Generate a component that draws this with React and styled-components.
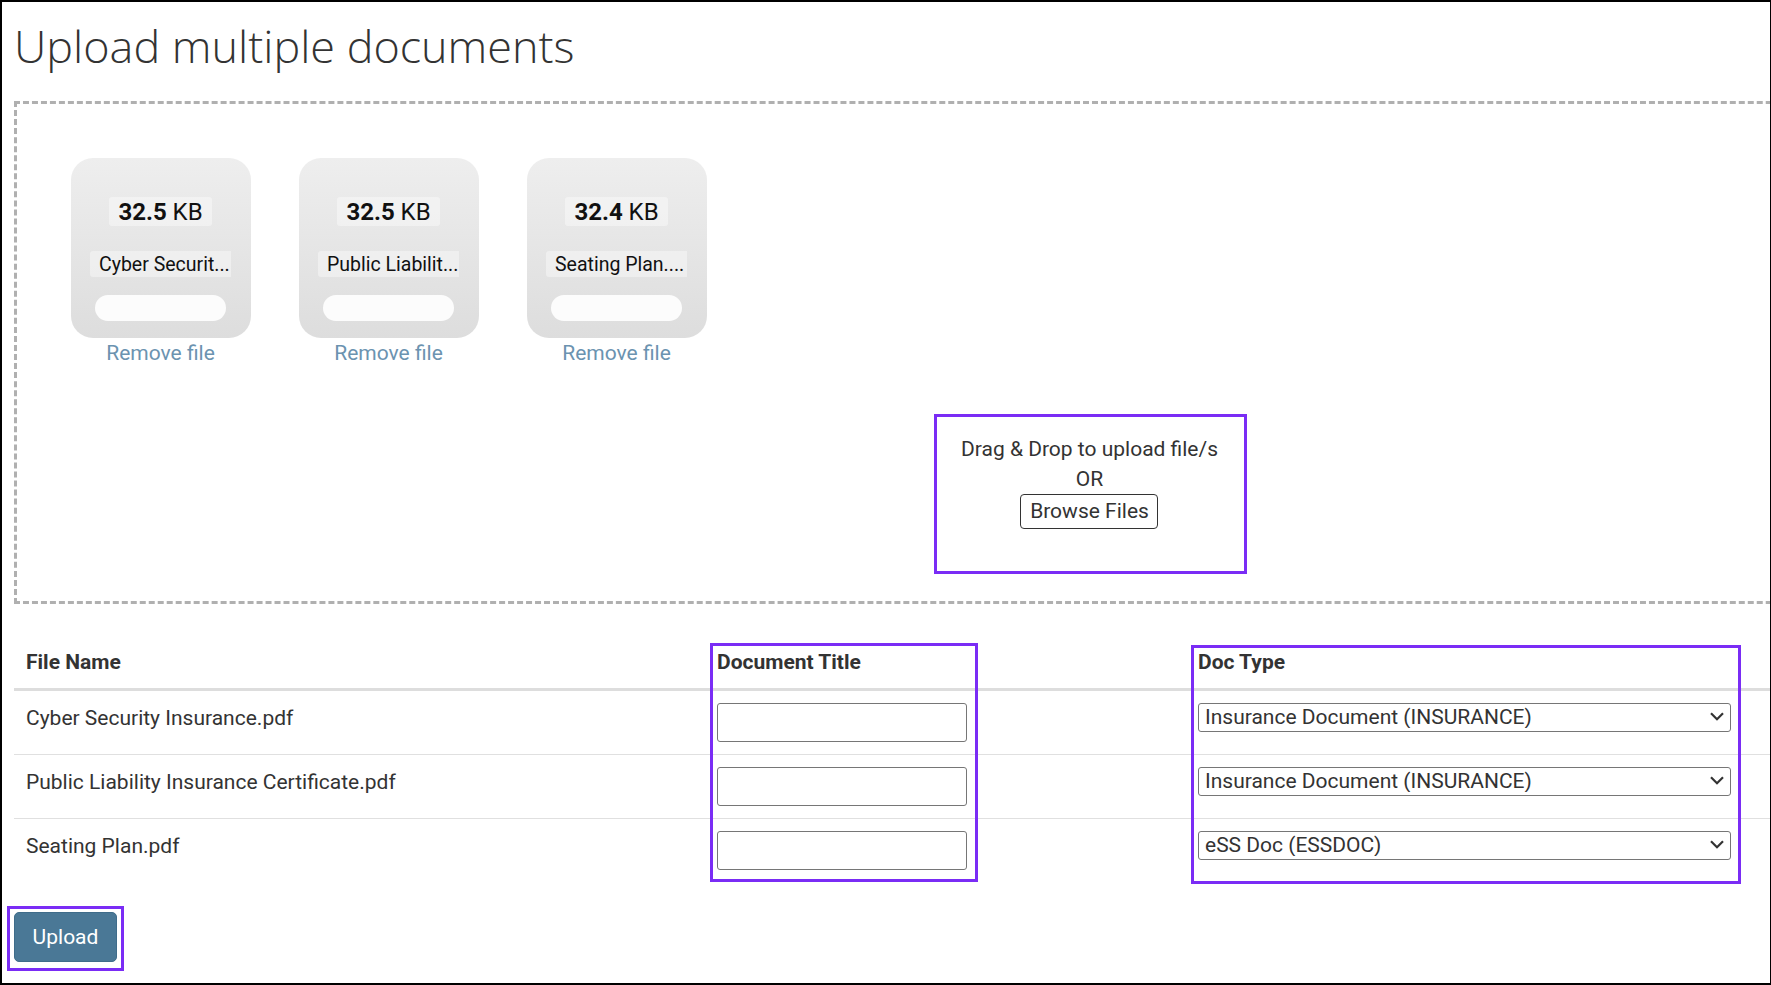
import React from 'react'
import styled, { createGlobalStyle } from 'styled-components'

const GlobalStyle = createGlobalStyle`
html, body {
  margin: 0;
  padding: 0;
  background: #fff;
}
* {
  box-sizing: border-box;
}
`;

const Frame = styled.div`
position: relative;
width: 1771px;
height: 985px;
overflow: hidden;
padding-left: 12px;
background: #fff;
border-style: solid;
border-color: #000;
border-width: 2px 1px 2px 2px;
color: #333;
font-family: Roboto, "Liberation Sans", sans-serif;
font-size: 21px;
line-height: 30px;
`;

const Title = styled.h1`
margin: 0;
height: 99px;
padding-top: 14px;
font-family: "Open Sans", "Liberation Sans", sans-serif;
font-weight: 300;
font-size: 44.95px;
line-height: 60px;
color: #333;
`;

const DropZone = styled.div`
width: 2153px;
height: 503px;
padding: 54px 54px 0;
display: flex;
flex-direction: column;
border: 3px dashed #b0b0b0;
`;

const Previews = styled.div`
display: flex;
gap: 48px;
`;

const Preview = styled.div`
width: 180px;
padding-right: 1px;
text-align: center;
`;

const Thumb = styled.div`
width: 180px;
height: 180px;
padding: 39px 1px 0 0;
display: flex;
flex-direction: column;
align-items: center;
border-radius: 22px;
background: linear-gradient(to bottom, #eee, #ddd);
color: #111;
`;

const SizePill = styled.div`
width: 103px;
height: 29px;
border-radius: 3px;
background: rgba(255, 255, 255, 0.4);
font-size: 24px;
line-height: 31px;
strong {
  font-weight: 700;
}
`;

const NamePill = styled.div`
width: 141px;
height: 26px;
margin-top: 25px;
padding-left: 9px;
background: rgba(255, 255, 255, 0.4);
border-radius: 3px 0 0 3px;
font-size: 19.5px;
line-height: 28px;
text-align: left;
white-space: nowrap;
overflow: hidden;
`;

const Progress = styled.div`
width: 131px;
height: 26px;
margin-top: 18px;
border-radius: 13px;
background: rgba(255, 255, 255, 0.9);
`;

const RemoveLink = styled.a`
display: block;
color: #6b93b0;
cursor: pointer;
`;

const Message = styled.div`
align-self: center;
width: 313px;
height: 160px;
margin-top: 46px;
padding: 17px 2px 0 0;
text-align: center;
border: 3px solid #7a2cf5;
`;

const BrowseButton = styled.button`
display: block;
width: 138px;
height: 35px;
margin: 0 0 0 83px;
padding: 0 0 2px 1px;
background: #fff;
border: 1px solid #333;
border-radius: 4px;
color: #333;
font: inherit;
`;

const Table = styled.table`
width: 1760px;
margin: 31px 0 0;
border-collapse: collapse;
table-layout: fixed;
`;

const HeadCell = styled.th`
width: ${p => p.$width}px;
padding: 12px 10px 11px;
font-weight: 700;
font-size: 21px;
text-align: left;
border-bottom: 3px solid #ddd;
&:first-child {
  padding-left: 12px;
}
`;

const Row = styled.tr`
& + & {
  border-top: 1px solid #e0e0e0;
}
`;

const Cell = styled.td`
height: 63px;
padding: 12px 10px;
vertical-align: top;
&:first-child {
  padding-left: 12px;
}
`;

const TitleInput = styled.input`
display: block;
width: 250px;
height: 39px;
border: 1px solid #767676;
border-radius: 3px;
background: #fff;
`;

const SelectWrap = styled.div`
position: relative;
width: 533px;
height: 29px;
svg {
  position: absolute;
  right: 7px;
  top: 9px;
  pointer-events: none;
}
`;

const TypeSelect = styled.select`
display: block;
width: 100%;
height: 100%;
padding: 0 6px 1px;
appearance: none;
border: 1px solid #767676;
border-radius: 3px;
background: #fff;
color: #333;
font: inherit;
line-height: 22px;
`;

const UploadWrap = styled.div`
width: 117px;
height: 65px;
margin: 24px 0 0 -7px;
padding: 3px 4px;
border: 3px solid #7a2cf5;
`;

const UploadButton = styled.button`
display: block;
width: 103px;
height: 50px;
padding: 0;
border: 1px solid #3f6c8a;
border-radius: 5px;
background: #4a7896;
color: #fff;
font: inherit;
`;

/* annotation boxes drawn on top of the table columns */
const Highlight = styled.div`
position: absolute;
left: ${p => p.$left}px;
top: ${p => p.$top}px;
width: ${p => p.$width}px;
height: 239px;
border: 3px solid #7a2cf5;
pointer-events: none;
`;

const files = [
  { size: '32.5', short: 'Cyber Securit...', name: 'Cyber Security Insurance.pdf', type: 'Insurance Document (INSURANCE)' },
  { size: '32.5', short: 'Public Liabilit...', name: 'Public Liability Insurance Certificate.pdf', type: 'Insurance Document (INSURANCE)' },
  { size: '32.4', short: 'Seating Plan....', name: 'Seating Plan.pdf', type: 'eSS Doc (ESSDOC)' },
]

export default function App() {
  return (
    <Frame>
      <GlobalStyle />
      <Title>Upload multiple documents</Title>
      <DropZone>
        <Previews>
          {files.map(f => (
            <Preview key={f.name}>
              <Thumb>
                <SizePill><strong>{f.size}</strong> KB</SizePill>
                <NamePill>{f.short}</NamePill>
                <Progress />
              </Thumb>
              <RemoveLink>Remove file</RemoveLink>
            </Preview>
          ))}
        </Previews>
        <Message>
          Drag &amp; Drop to upload file/s
          <br />
          OR
          <BrowseButton>Browse Files</BrowseButton>
        </Message>
      </DropZone>
      <Table>
        <thead>
          <tr>
            <HeadCell $width={693}>File Name</HeadCell>
            <HeadCell $width={481}>Document Title</HeadCell>
            <HeadCell>Doc Type</HeadCell>
          </tr>
        </thead>
        <tbody>
          {files.map(f => (
            <Row key={f.name}>
              <Cell>{f.name}</Cell>
              <Cell><TitleInput /></Cell>
              <Cell>
                <SelectWrap>
                  <TypeSelect defaultValue={f.type}>
                    <option>{f.type}</option>
                  </TypeSelect>
                  <svg width="14" height="9" viewBox="0 0 14 9" fill="none">
                    <path d="M1 1.2L7 7.2L13 1.2" stroke="#333" strokeWidth="2.2" />
                  </svg>
                </SelectWrap>
              </Cell>
            </Row>
          ))}
        </tbody>
      </Table>
      <UploadWrap>
        <UploadButton>Upload</UploadButton>
      </UploadWrap>
      <Highlight $left={708} $top={641} $width={268} />
      <Highlight $left={1189} $top={643} $width={550} />
    </Frame>
  )
}
